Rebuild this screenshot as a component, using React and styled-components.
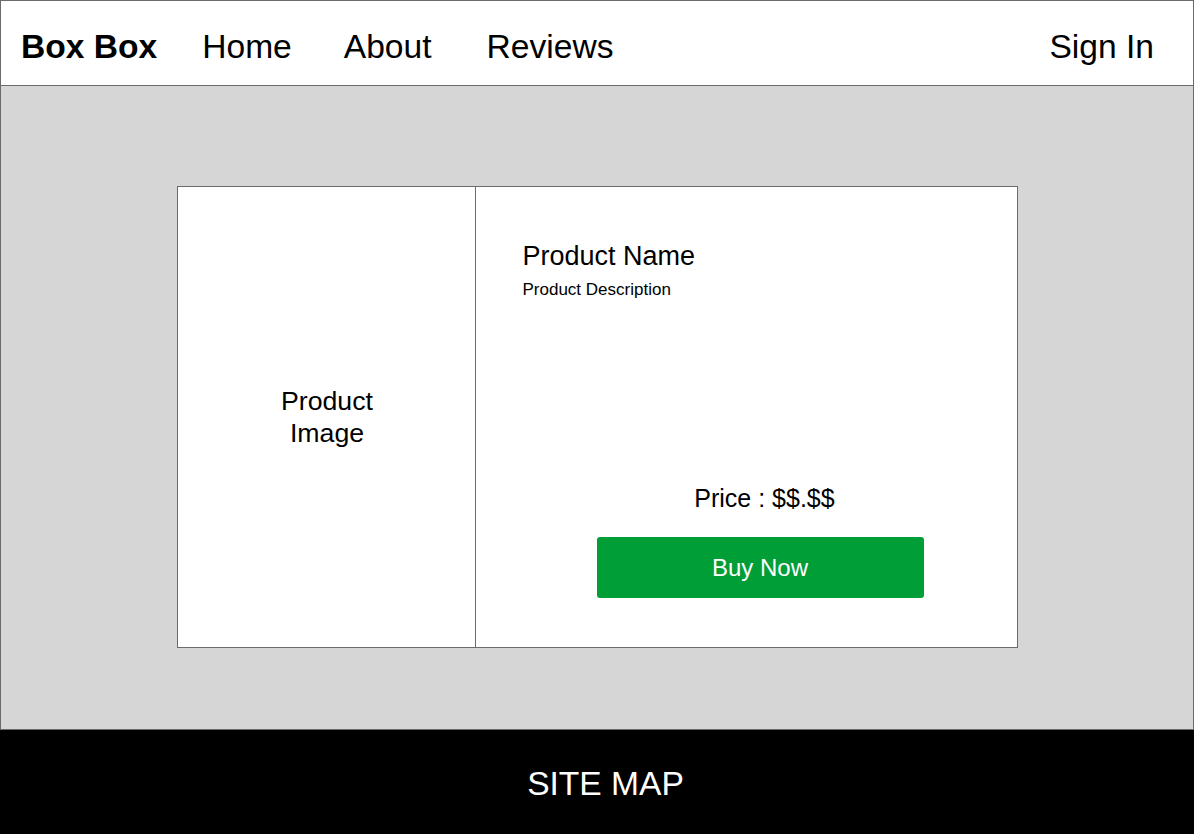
import React from "react";
import styled, { createGlobalStyle } from "styled-components";

const Global = createGlobalStyle`
  html, body { margin: 0; padding: 0; }
  body { font-family: "Liberation Sans", Arial, sans-serif; color: #000; background: #fff; }
  * { box-sizing: border-box; }
`;

const Page = styled.div`
  width: 1194px;
  height: 834px;
  display: flex;
  flex-direction: column;
  overflow: hidden;
`;

const Header = styled.header`
  height: 86px;
  border: 1px solid #6b6b6b;
  background: #fff;
  display: flex;
  align-items: center;
  padding: 7px 39px 0 20px;
`;

const Brand = styled.div`
  font-size: 33.6px;
  font-weight: 700;
  line-height: 1;
`;

const NavLink = styled.a`
  font-size: 33.6px;
  line-height: 1;
  color: #000;
  text-decoration: none;
  margin-left: ${(p) => p.$ml}px;
`;

const SignIn = styled(NavLink)`
  margin-left: auto;
`;

const Main = styled.main`
  height: 644px;
  background: #d6d6d6;
  border: 1px solid #6b6b6b;
  border-top: none;
  display: flex;
  justify-content: center;
  align-items: flex-start;
  padding-top: 100px;
`;

const Card = styled.section`
  width: 841px;
  height: 462px;
  background: #fff;
  border: 1px solid #6b6b6b;
  display: flex;
`;

const ImagePanel = styled.div`
  width: 298px;
  border-right: 1px solid #6b6b6b;
  display: flex;
  align-items: center;
  justify-content: center;
  text-align: center;
  font-size: 26.7px;
  line-height: 32px;
  padding-bottom: 1px;
  padding-left: 2px;
`;

const InfoPanel = styled.div`
  flex: 1;
  display: flex;
  flex-direction: column;
  padding: 53px 0 0 47px;
`;

const ProductName = styled.h1`
  margin: 0;
  font-size: 27px;
  font-weight: 400;
  line-height: 32px;
`;

const ProductDesc = styled.p`
  margin: 8px 0 0;
  font-size: 17px;
  line-height: 20px;
`;

const BuyGroup = styled.div`
  margin-top: auto;
  margin-left: 74px;
  margin-bottom: 49px;
  width: 327px;
  display: flex;
  flex-direction: column;
  align-items: center;
`;

const Price = styled.div`
  font-size: 25px;
  line-height: 30px;
  padding-left: 9px;
`;

const BuyButton = styled.button`
  margin-top: 24px;
  width: 327px;
  height: 61px;
  border: none;
  border-radius: 3px;
  background: #009e37;
  color: #fff;
  font-family: "Liberation Sans", Arial, sans-serif;
  font-size: 24px;
  cursor: pointer;
`;

const Footer = styled.footer`
  flex: 1;
  background: #000;
  color: #fff;
  display: flex;
  align-items: center;
  justify-content: center;
  font-size: 33.6px;
  padding-left: 17px;
  padding-top: 4px;
`;

export default function App() {
  return (
    <>
      <Global />
      <Page>
        <Header>
          <Brand>Box Box</Brand>
          <NavLink $ml={45}>Home</NavLink>
          <NavLink $ml={52}>About</NavLink>
          <NavLink $ml={55}>Reviews</NavLink>
          <SignIn>Sign In</SignIn>
        </Header>
        <Main>
          <Card>
            <ImagePanel>
              Product
              <br />
              Image
            </ImagePanel>
            <InfoPanel>
              <ProductName>Product Name</ProductName>
              <ProductDesc>Product Description</ProductDesc>
              <BuyGroup>
                <Price>Price : $$.$$</Price>
                <BuyButton>Buy Now</BuyButton>
              </BuyGroup>
            </InfoPanel>
          </Card>
        </Main>
        <Footer>SITE MAP</Footer>
      </Page>
    </>
  );
}
